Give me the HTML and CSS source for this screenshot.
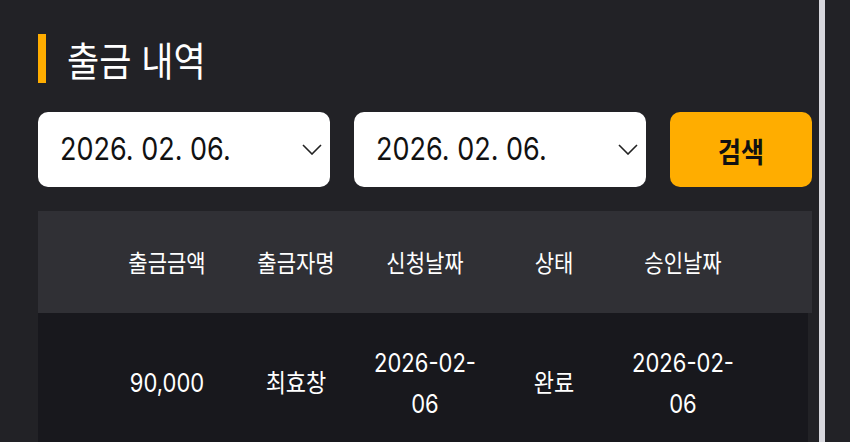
FILE: index.html
```html
<!DOCTYPE html>
<html lang="ko">
<head>
  <meta charset="UTF-8" />
  <meta name="viewport" content="width=device-width, initial-scale=1.0"/>
  <title>출금 내역</title>
  <link rel="stylesheet" href="styles.css">
</head>
<body>
  <div class="page">
    <div class="content">
      <h2 class="title"><span>출금 내역</span></h2>

      <div class="search">
        <div class="date-box">
          <span>2026. 02. 06.</span>
          <svg class="chev" width="20" height="11" viewBox="0 0 20 11"><path d="M1 1 L10 10 L19 1" fill="none" stroke="#222" stroke-width="1.6"/></svg>
        </div>
        <div class="date-box">
          <span>2026. 02. 06.</span>
          <svg class="chev" width="20" height="11" viewBox="0 0 20 11"><path d="M1 1 L10 10 L19 1" fill="none" stroke="#222" stroke-width="1.6"/></svg>
        </div>
        <button class="btn-search"><span>검색</span></button>
      </div>

      <div class="history">
        <div class="row head">
          <div class="cell"><span>출금금액</span></div>
          <div class="cell"><span>출금자명</span></div>
          <div class="cell"><span>신청날짜</span></div>
          <div class="cell"><span>상태</span></div>
          <div class="cell"><span>승인날짜</span></div>
        </div>
        <div class="row item">
          <div class="cell"><span>90,000</span></div>
          <div class="cell"><span>최효창</span></div>
          <div class="cell"><span>2026-02-06</span></div>
          <div class="cell"><span>완료</span></div>
          <div class="cell"><span>2026-02-06</span></div>
        </div>
      </div>
    </div>
    <div class="rail"></div>
  </div>
</body>
</html>
```

FILE: styles.css
```css
body {
  margin: 0;
  background: #222226;
  font-family: Inter, "Noto Sans CJK KR", sans-serif;
  color: #fff;
  overflow: hidden;
}
.page {
  display: flex;
  height: 442px;
}
.content {
  width: 774px;
  padding: 34px 7px 0 38px;
}
.rail {
  width: 6px;
  background: #d7d7dd;
}
.title {
  margin: 0;
  height: 49px;
  border-left: 8px solid #ffad00;
  padding-left: 21px;
  display: flex;
  align-items: center;
  font-family: "Noto Sans CJK KR", sans-serif;
  font-size: 35px;
  font-weight: 400;
}
.title span,
.date-box span,
.btn-search span,
.cell span {
  display: inline-block;
  transform: scaleY(1.15);
}
.search {
  display: flex;
  gap: 24px;
  margin-top: 29px;
}
.date-box {
  width: 292px;
  height: 75px;
  box-sizing: border-box;
  background: #fff;
  border-radius: 10px;
  display: flex;
  align-items: center;
  justify-content: space-between;
  padding: 0 8px 0 22px;
  color: #111;
  font-size: 27px;
}
.btn-search {
  width: 142px;
  height: 75px;
  border: none;
  border-radius: 10px;
  background: #ffad00;
  color: #111;
  font-family: "Noto Sans CJK KR", sans-serif;
  font-size: 25px;
  font-weight: 700;
}
.history {
  margin-top: 24px;
}
.row {
  display: grid;
  grid-template-columns: repeat(5, 129px);
  justify-content: center;
  text-align: center;
  align-items: center;
}
.head {
  background: #303035;
  height: 102px;
  font-family: "Noto Sans CJK KR", sans-serif;
  font-size: 21px;
}
.item {
  background: #18181d;
  margin-right: 4px;
  padding-left: 4px;
  height: 140px;
  font-size: 22px;
  line-height: 36px;
}
.cell {
  padding: 0 8px;
}
```
